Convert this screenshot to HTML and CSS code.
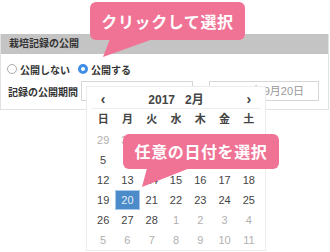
FILE: index.html
```html
<!DOCTYPE html>
<html lang="ja">
<head>
    <meta charset="UTF-8">
    <title>栽培記録の公開</title>
    <link rel="stylesheet" href="styles.css">
</head>
<body>
    <div class="panel">
        <div class="panel-head">栽培記録の公開</div>
        <div class="panel-body">
            <div class="radio-row">
                <label class="radio"><span class="radio-mark"></span>公開しない</label>
                <label class="radio checked"><span class="radio-mark"></span>公開する</label>
            </div>
            <div class="period-row">
                <span class="period-label">記録の公開期間</span>
                <div class="date-input date-from"></div>
                <div class="date-input date-to">2017年9月20日</div>
            </div>
        </div>
    </div>

    <!-- date picker dropdown -->
    <div class="calendar">
        <div class="cal-head">
            <span class="cal-nav">‹</span>
            <span class="cal-title">2017<span class="cal-month">2月</span></span>
            <span class="cal-nav">›</span>
        </div>
        <div class="cal-grid">
            <span class="dow">日</span><span class="dow">月</span><span class="dow">火</span><span class="dow">水</span><span class="dow">木</span><span class="dow">金</span><span class="dow">土</span>

            <span class="day other">29</span><span class="day other">30</span><span class="day other">31</span><span class="day">1</span><span class="day">2</span><span class="day">3</span><span class="day">4</span>
            <span class="day">5</span><span class="day">6</span><span class="day">7</span><span class="day">8</span><span class="day">9</span><span class="day">10</span><span class="day">11</span>
            <span class="day">12</span><span class="day">13</span><span class="day">14</span><span class="day">15</span><span class="day">16</span><span class="day">17</span><span class="day">18</span>
            <span class="day">19</span><span class="day active">20</span><span class="day">21</span><span class="day">22</span><span class="day">23</span><span class="day">24</span><span class="day">25</span>
            <span class="day">26</span><span class="day">27</span><span class="day">28</span><span class="day other">1</span><span class="day other">2</span><span class="day other">3</span><span class="day other">4</span>
            <span class="day other">5</span><span class="day other">6</span><span class="day other">7</span><span class="day other">8</span><span class="day other">9</span><span class="day other">10</span><span class="day other">11</span>
        </div>
    </div>

    <!-- callouts -->
    <div class="callout callout-click">クリックして選択</div>
    <div class="callout callout-date">任意の日付を選択</div>
</body>
</html>
```

FILE: styles.css
```css
body {
    margin: 0;
    width: 330px;
    height: 252px;
    overflow: hidden;
    position: relative;
    background-color: #fff;
    font-family: "Liberation Sans", "Noto Sans CJK JP", sans-serif;
    color: #333;
}

.panel {
    margin-top: 34px;
    width: 327px;
    border: 1px solid #e2e2e2;
    border-top: none;
}
.panel-head {
    height: 20px;
    line-height: 20px;
    padding-left: 8px;
    background-color: #c4c4c4;
    font-size: 10px;
    font-weight: bold;
    color: #333;
}
.panel-body {
    padding: 8px 0 8px 6px;
}
.radio-row {
    display: flex;
    align-items: center;
    height: 14px;
    font-size: 10px;
    font-weight: bold;
}
.radio {
    display: flex;
    align-items: center;
    margin-right: 8px;
}
.radio-mark {
    width: 8px;
    height: 8px;
    border: 1px solid #aaa;
    border-radius: 50%;
    margin-right: 3px;
    background-color: #fff;
}
.radio.checked .radio-mark {
    width: 4px;
    height: 4px;
    border: 3px solid #3f8de6;
}
.period-row {
    display: flex;
    align-items: center;
    margin-top: 5px;
}
.period-label {
    font-size: 10px;
    font-weight: bold;
    margin-left: 1px;
    width: 73px;
}
.date-input {
    height: 18px;
    border: 1px solid #d6d6d6;
    font-size: 11px;
    line-height: 18px;
    color: #999;
}
.date-from {
    width: 110px;
}
.date-to {
    width: 94px;
    margin-left: 16px;
    padding-right: 14px;
    text-align: right;
    white-space: nowrap;
}

/* calendar dropdown */
.calendar {
    position: absolute;
    left: 86px;
    top: 86px;
    width: 178px;
    height: 163px;
    border: 1px solid #ececec;
    background-color: #fff;
}
.cal-head {
    display: grid;
    grid-template-columns: repeat(7, 1fr);
    margin: 0 4px;
    height: 16px;
    padding-top: 5px;
    line-height: 16px;
    border-bottom: 1px solid #eee;
    font-size: 12px;
    font-weight: bold;
    color: #444;
    text-align: center;
}
.cal-nav {
    font-size: 14px;
    line-height: 14px;
}
.cal-title {
    grid-column: 2 / 7;
}
.cal-month {
    margin-left: 10px;
}
.cal-grid {
    display: grid;
    grid-template-columns: repeat(7, 1fr);
    margin: 0 4px;
    font-size: 11px;
    color: #444;
    text-align: center;
}
.dow {
    height: 21px;
    line-height: 21px;
    font-weight: bold;
}
.day {
    height: 20px;
    line-height: 20px;
}
.day.other {
    color: #b0b0b0;
}
.day.active {
    box-sizing: border-box;
    border: 1px solid #a9c9ea;
    background-color: #4b8bca;
    color: #e6eef7;
    line-height: 18px;
}

/* pink callouts */
.callout {
    position: absolute;
    box-sizing: border-box;
    background-color: #f07395;
    border-radius: 6px;
    color: #fff;
    font-family: "Noto Sans CJK JP", sans-serif;
    font-size: 16px;
    font-weight: bold;
    letter-spacing: 0.6px;
    text-align: center;
}
.callout::after {
    content: "";
    position: absolute;
    background-color: #f07395;
}
.callout-click {
    left: 90px;
    top: 2px;
    width: 155px;
    height: 38px;
    line-height: 38px;
}
.callout-click::after {
    left: 13px;
    top: 37px;
    width: 50px;
    height: 18px;
    clip-path: polygon(7px 0, 50px 0, 0 18px);
}
.callout-date {
    left: 123px;
    top: 134px;
    width: 156px;
    height: 35px;
    line-height: 35px;
}
.callout-date::after {
    left: 19px;
    top: 34px;
    width: 48px;
    height: 19px;
    clip-path: polygon(5px 0, 48px 0, 0 19px);
}
```
